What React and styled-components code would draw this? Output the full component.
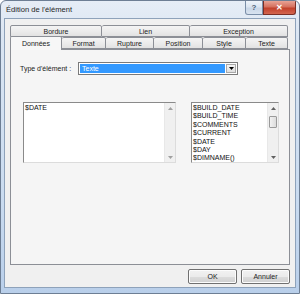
import React, { useState } from "react";
import styled, { createGlobalStyle } from "styled-components";

const GlobalStyle = createGlobalStyle`
  html, body { margin: 0; padding: 0; background: #ffffff; }
  body { font-family: "Liberation Sans", Arial, sans-serif; font-size: 7px; color: #000; }
`;

const Window = styled.div`
  width: 300px;
  height: 294px;
  box-sizing: border-box;
  border: 1px solid #6d7e94;
  border-radius: 6px 6px 0 0;
  background: linear-gradient(180deg, #e6edf6 0%, #dbe6f3 12%, #c9dbf0 70%, #b9cfea 100%);
  display: flex;
  flex-direction: column;
  overflow: hidden;
`;

const TitleBar = styled.div`
  height: 17px;
  display: flex;
  align-items: flex-start;
  justify-content: space-between;
  padding-left: 5px;
`;

const Title = styled.div`
  font-size: 7.6px;
  line-height: 17px;
  color: #1e1e1e;
`;

const Caption = styled.div`
  display: flex;
  margin-right: 3px;
`;

const CaptionButton = styled.div`
  width: ${p => p.$w}px;
  height: 14px;
  box-sizing: border-box;
  border: 1px solid ${p => (p.$close ? "#7a2f26" : "#7a8ea8")};
  border-top: none;
  border-radius: ${p => (p.$close ? "0 0 3px 0" : "0 0 0 3px")};
  background: ${p =>
    p.$close
      ? "linear-gradient(180deg, #e8a396 0%, #d5705e 45%, #c2412c 55%, #d3664f 100%)"
      : "linear-gradient(180deg, #eef3fa 0%, #dbe5f1 45%, #c9d6e7 55%, #d8e3f0 100%)"};
  display: flex;
  align-items: center;
  justify-content: center;
  color: ${p => (p.$close ? "#ffffff" : "#4d5f78")};
  font-size: 8px;
  font-weight: bold;
`;

const Client = styled.div`
  flex: 1;
  margin: 0 3px 5px 3px;
  border: 1px solid #8ea2ba;
  background: #f0f0f0;
  display: flex;
  flex-direction: column;
  padding: 6px 5px 3px 5px;
`;

const TabControl = styled.div`
  flex: 1;
  display: flex;
  flex-direction: column;
`;

const TabRow = styled.div`
  display: flex;
  height: ${p => p.$h}px;
  align-items: flex-end;
  padding-right: 2px;
`;

const Tab = styled.div`
  width: ${p => p.$w}px;
  height: ${p => (p.$active ? 14 : 12)}px;
  box-sizing: border-box;
  border: 1px solid #8c8f96;
  border-bottom: ${p => (p.$active ? "none" : "1px solid #8c8f96")};
  border-left: ${p => (p.$first || p.$active ? "1px solid #8c8f96" : "none")};
  border-radius: 2px 2px 0 0;
  background: ${p =>
    p.$active ? "#f7f7f7" : "linear-gradient(180deg, #f4f4f4 0%, #ececec 50%, #e2e2e2 100%)"};
  display: flex;
  align-items: center;
  justify-content: center;
  font-size: 7px;
  color: #222;
  margin-bottom: ${p => (p.$active ? "-1px" : "0")};
  position: relative;
  z-index: ${p => (p.$active ? 2 : 1)};
  cursor: default;
`;

const Panel = styled.div`
  flex: 1;
  border: 1px solid #8c8f96;
  background: #f5f5f5;
  display: flex;
  flex-direction: column;
  padding: 12px 0 0 9px;
`;

const FieldRow = styled.div`
  display: flex;
  align-items: center;
  height: 13px;
`;

const Label = styled.div`
  width: 58px;
  font-size: 7px;
  color: #222;
`;

const Combo = styled.div`
  width: 160px;
  height: 13px;
  box-sizing: border-box;
  border: 1px solid #7a7a7a;
  background: #ffffff;
  display: flex;
  padding: 1px;
`;

const ComboValue = styled.div`
  flex: 1;
  background: #3399ff;
  color: #ffffff;
  font-size: 7px;
  line-height: 9px;
  padding-left: 2px;
`;

const ComboArrow = styled.div`
  width: 10px;
  margin-left: 1px;
  box-sizing: border-box;
  border: 1px solid #a8a8a8;
  background: linear-gradient(180deg, #f5f5f5, #dedede);
  display: flex;
  align-items: center;
  justify-content: center;
`;

const Boxes = styled.div`
  display: flex;
  margin-top: 27px;
  margin-left: 3px;
  gap: 15px;
`;

const Box = styled.div`
  width: ${p => p.$w}px;
  height: 61px;
  box-sizing: border-box;
  border: 1px solid #8a8a8a;
  border-right-color: #dcdcdc;
  border-bottom-color: #dcdcdc;
  background: #ffffff;
  display: flex;
`;

const BoxText = styled.div`
  flex: 1;
  padding: 1px 0 0 1px;
  font-size: 7px;
  line-height: 8.4px;
  color: #111;
  overflow: hidden;
  white-space: nowrap;
`;

const Scrollbar = styled.div`
  width: 10px;
  background: #f0f0f0;
  border-left: 1px solid #e8e8e8;
  display: flex;
  flex-direction: column;
  align-items: center;
`;

const ScrollArrow = styled.div`
  height: 10px;
  display: flex;
  align-items: center;
  justify-content: center;
`;

const ScrollTrack = styled.div`
  flex: 1;
  width: 100%;
  padding-top: 3px;
`;

const Thumb = styled.div`
  height: 10px;
  margin: 0 1px;
  border: 1px solid #9a9a9a;
  border-radius: 1px;
  background: linear-gradient(90deg, #f2f2f2, #dcdcdc);
`;

const ButtonRow = styled.div`
  display: flex;
  justify-content: flex-end;
  gap: 4px;
  margin-top: 4px;
`;

const Button = styled.button`
  width: 49px;
  height: 15px;
  box-sizing: border-box;
  border: 1px solid #707070;
  border-radius: 2px;
  background: linear-gradient(180deg, #f2f2f2 0%, #ebebeb 50%, #dddddd 51%, #cfcfcf 100%);
  font-family: "Liberation Sans", Arial, sans-serif;
  font-size: 7px;
  color: #222;
  padding: 0;
  box-shadow: inset 0 0 0 1px #fcfcfc;
`;

const Arrow = ({ up, color = "#606060" }) => (
  <svg width="5" height="3" viewBox="0 0 5 3">
    <path d={up ? "M0 3 L2.5 0 L5 3 Z" : "M0 0 L5 0 L2.5 3 Z"} fill={color} />
  </svg>
);

const backTabs = [
  { label: "Bordure", w: 92 },
  { label: "Lien", w: 88 },
  { label: "Exception", w: 98 },
];

const frontTabs = [
  { label: "Données", w: 52 },
  { label: "Format", w: 44 },
  { label: "Rupture", w: 48 },
  { label: "Position", w: 49 },
  { label: "Style", w: 43 },
  { label: "Texte", w: 42 },
];

const variables = [
  "$BUILD_DATE",
  "$BUILD_TIME",
  "$COMMENTS",
  "$CURRENT",
  "$DATE",
  "$DAY",
  "$DIMNAME()",
];

const App = () => {
  const [active, setActive] = useState("Données");

  return (
    <>
      <GlobalStyle />
      <Window>
        <TitleBar>
          <Title>Édition de l'élément</Title>
          <Caption>
            <CaptionButton $w={18}>?</CaptionButton>
            <CaptionButton $w={33} $close>✕</CaptionButton>
          </Caption>
        </TitleBar>
        <Client>
          <TabControl>
            <TabRow $h={12}>
              {backTabs.map((t, i) => (
                <Tab key={t.label} $w={t.w} $first={i === 0}>{t.label}</Tab>
              ))}
            </TabRow>
            <TabRow $h={12}>
              {frontTabs.map((t, i) => (
                <Tab
                  key={t.label}
                  $w={t.w}
                  $first={i === 0}
                  $active={active === t.label}
                  onClick={() => setActive(t.label)}
                >
                  {t.label}
                </Tab>
              ))}
            </TabRow>
            <Panel>
              <FieldRow>
                <Label>Type d'élément :</Label>
                <Combo>
                  <ComboValue>Texte</ComboValue>
                  <ComboArrow><Arrow color="#000" /></ComboArrow>
                </Combo>
              </FieldRow>
              <Boxes>
                <Box $w={153}>
                  <BoxText>$DATE</BoxText>
                  <Scrollbar>
                    <ScrollArrow><Arrow up color="#a0a0a0" /></ScrollArrow>
                    <ScrollTrack />
                    <ScrollArrow><Arrow color="#a0a0a0" /></ScrollArrow>
                  </Scrollbar>
                </Box>
                <Box $w={88}>
                  <BoxText>
                    {variables.map(v => <div key={v}>{v}</div>)}
                  </BoxText>
                  <Scrollbar>
                    <ScrollArrow><Arrow up /></ScrollArrow>
                    <ScrollTrack><Thumb /></ScrollTrack>
                    <ScrollArrow><Arrow /></ScrollArrow>
                  </Scrollbar>
                </Box>
              </Boxes>
            </Panel>
          </TabControl>
          <ButtonRow>
            <Button>OK</Button>
            <Button>Annuler</Button>
          </ButtonRow>
        </Client>
      </Window>
    </>
  );
};

export default App;
